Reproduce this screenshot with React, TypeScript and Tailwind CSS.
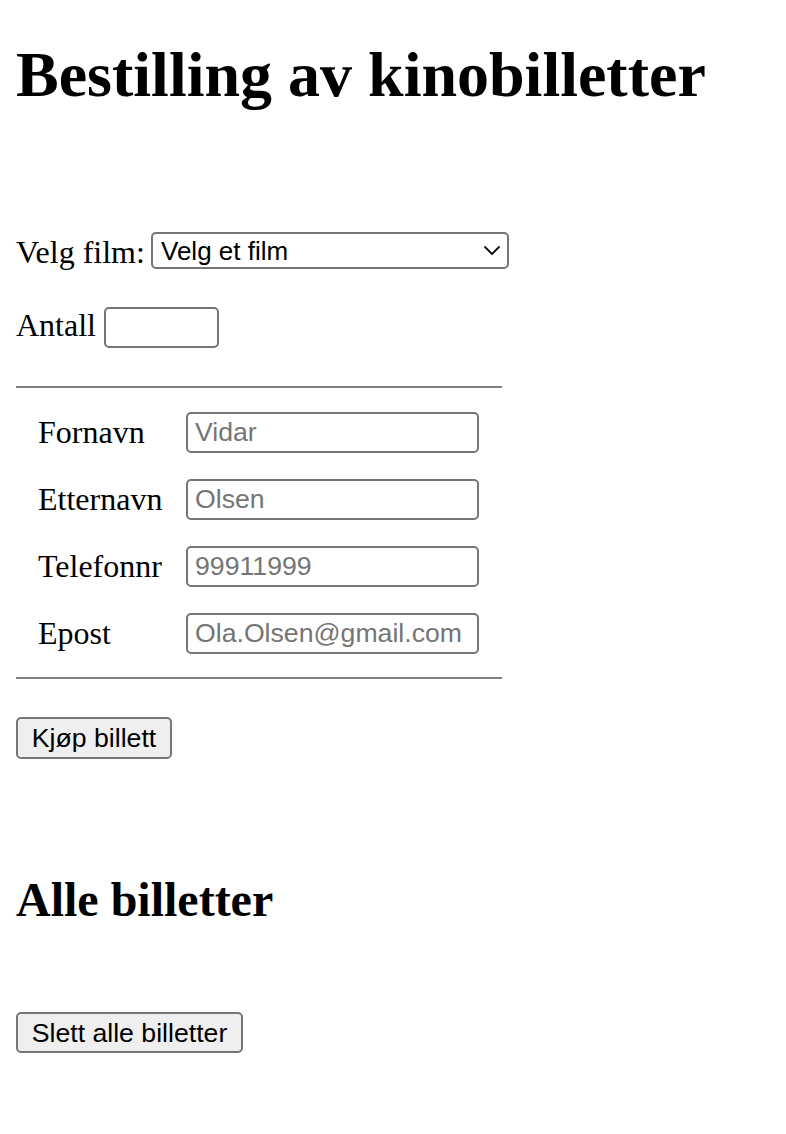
import React from "react";

const serif = { fontFamily: '"Liberation Serif", "Times New Roman", serif' };

function Field({ label, placeholder }: { label: string; placeholder: string }) {
  return (
    <div className="flex pl-[22px] mt-[26px] first:mt-0">
      <label className="w-[148px] mt-[4px] text-[32px] leading-[32px]">{label}</label>
      <input
        type="text"
        placeholder={placeholder}
        className="h-[41px] w-[293px] rounded-[5px] border-2 border-[#767676] bg-white pl-[7px] text-[26.67px] text-black placeholder:text-[#757575] outline-none font-['Liberation_Sans',Arial,sans-serif]"
      />
    </div>
  );
}

export default function App() {
  return (
    <div className="min-h-[1134px] bg-white pl-4 text-black font-['Liberation_Serif','Times_New_Roman',serif]" style={serif}>
      <h1 className="mt-[43px] text-[64px] leading-[64px] font-bold">Bestilling av kinobilletter</h1>

      <div className="mt-[125px] flex">
        <label className="w-[135px] mt-[4px] text-[32px] leading-[32px]">Velg film:</label>
        <div className="relative h-[37px] w-[358px]">
          <select className="h-[37px] w-[358px] appearance-none rounded-[5px] border-2 border-[#767676] bg-white pl-[8px] text-[26px] leading-[30px] text-black outline-none font-['Liberation_Sans',Arial,sans-serif]">
            <option>Velg et film</option>
          </select>
          <svg
            className="pointer-events-none absolute right-[9px] top-[14px]"
            width="16"
            height="9"
            viewBox="0 0 16 9"
            fill="none"
          >
            <path d="M1 1l7 7 7-7" stroke="#111" strokeWidth="1.8" strokeLinecap="round" strokeLinejoin="round" />
          </svg>
        </div>
      </div>

      <div className="mt-[36px] flex">
        <label className="mt-[4px] text-[32px] leading-[32px]">Antall</label>
        <input
          type="text"
          className="ml-[8px] mt-[2px] h-[41px] w-[115px] rounded-[5px] border-2 border-[#767676] bg-white outline-none"
        />
      </div>

      <div className="mt-[38px] h-[2px] w-[486px] bg-[#808080]" />

      <div className="mt-[24px] flex flex-col">
        <Field label="Fornavn" placeholder="Vidar" />
        <Field label="Etternavn" placeholder="Olsen" />
        <Field label="Telefonnr" placeholder="99911999" />
        <Field label="Epost" placeholder="Ola.Olsen@gmail.com" />
      </div>

      <div className="mt-[23px] h-[2px] w-[486px] bg-[#808080]" />

      <button className="mt-[38px] flex h-[42px] w-[156px] items-center justify-center rounded-[5px] border-2 border-[#767676] bg-[#efefef] text-[26.67px] text-black font-['Liberation_Sans',Arial,sans-serif]">
        Kjøp billett
      </button>

      <h2 className="mt-[117px] text-[48px] leading-[48px] font-bold">Alle billetter</h2>

      <button className="mt-[88px] flex h-[41px] w-[227px] items-center justify-center rounded-[5px] border-2 border-[#767676] bg-[#efefef] text-[26.67px] text-black font-['Liberation_Sans',Arial,sans-serif]">
        Slett alle billetter
      </button>
    </div>
  );
}
